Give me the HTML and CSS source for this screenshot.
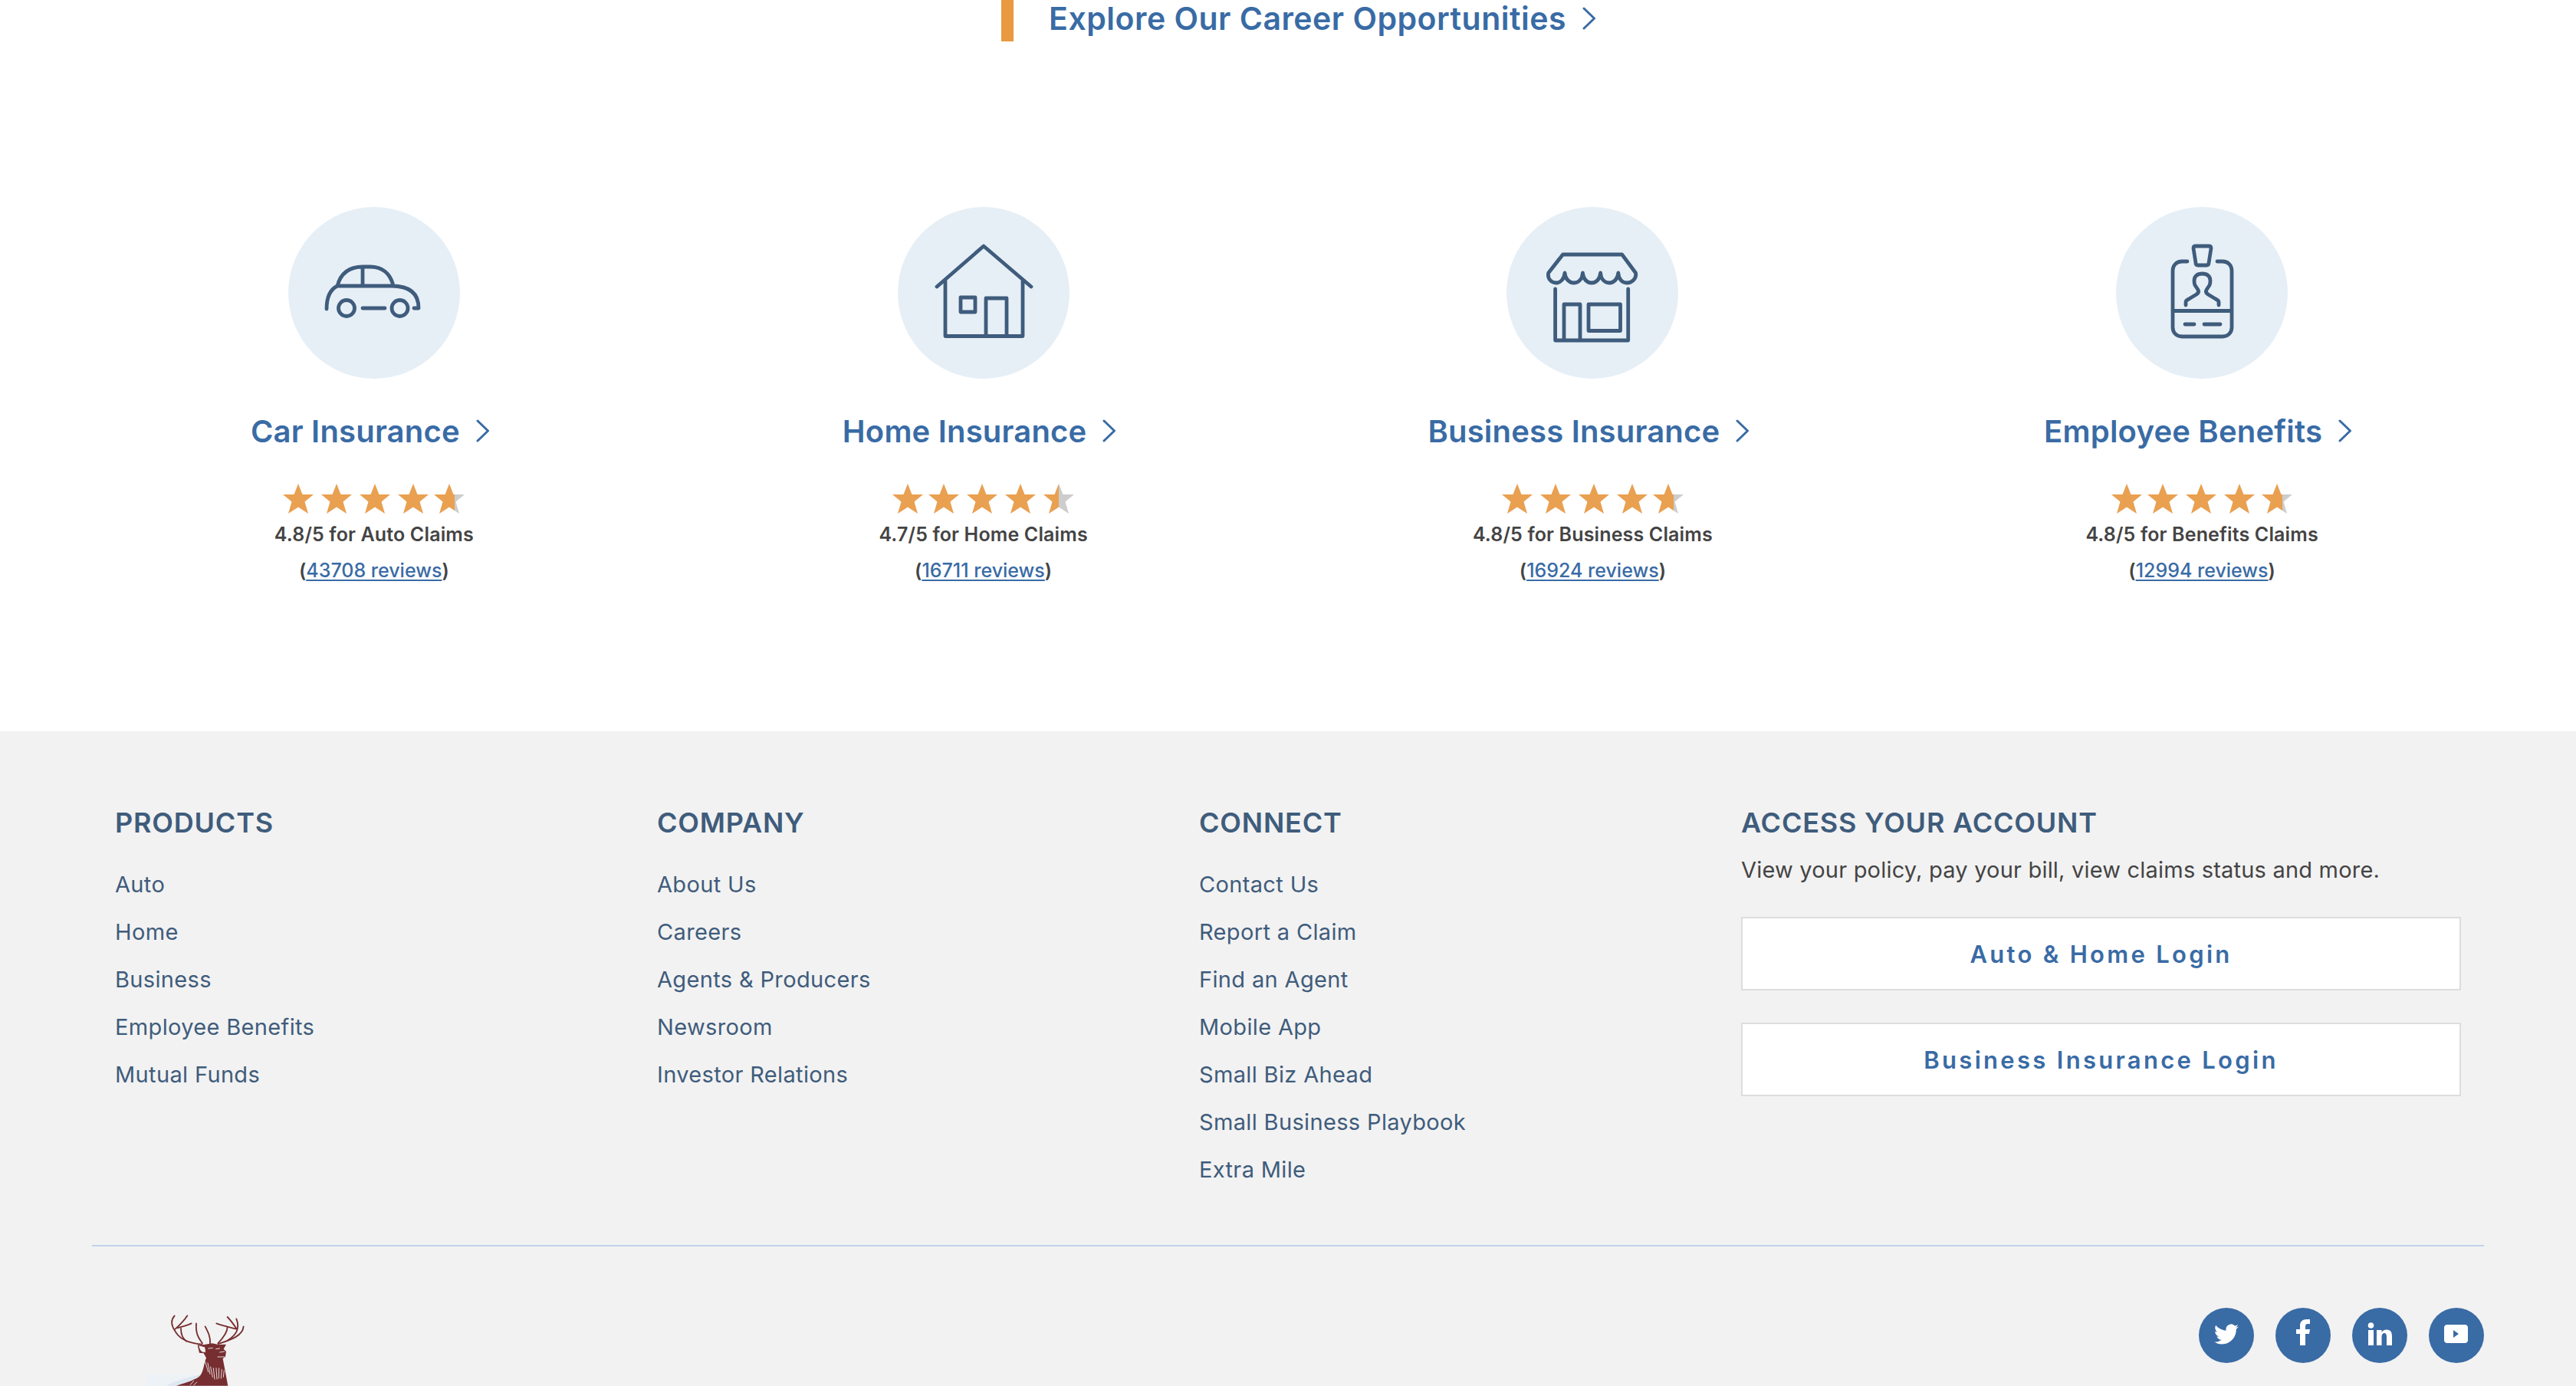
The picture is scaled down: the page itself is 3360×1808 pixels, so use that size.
FILE: index.html
```html
<!DOCTYPE html>
<html lang="en">
<head>
<meta charset="utf-8">
<title>Insurance</title>
<link rel="stylesheet" href="styles.css">
</head>
<body>
<svg class="defs" width="0" height="0" aria-hidden="true">
  <defs>
    <linearGradient id="p68"><stop offset="68%" stop-color="#E9A050"/><stop offset="68%" stop-color="#CDCDCD"/></linearGradient>
    <linearGradient id="p50"><stop offset="51%" stop-color="#E9A050"/><stop offset="51%" stop-color="#CDCDCD"/></linearGradient>
    <symbol id="star" viewBox="0 0 40 39"><polygon points="20,0 25.5,14 40,14 28.5,23.5 33,39 20,30.5 7,39 11.5,23.5 0,14 14.5,14"/></symbol>
    <symbol id="chev" viewBox="0 0 18 30"><path d="M2 2 L15.5 15 L2 28" fill="none" stroke="currentColor" stroke-width="3" stroke-linecap="round" stroke-linejoin="round"/></symbol>
  </defs>
</svg>

<a class="cta" href="#"><span class="cta-bar"></span><span class="cta-text">Explore Our Career Opportunities</span><svg class="chev"><use href="#chev"/></svg></a>

<section class="products">
  <article class="product">
    <div class="disc"><svg class="pic" viewBox="0 0 224 224"><path d="M50 133C50 120 54 108 64 103H135C158 103 170 112 170 132H164M64 103C68 88 78 78 97 78H107C122 78 133 86 137 103M97 78V103M97 132H126"/><ellipse cx="76" cy="132" rx="10.500" ry="10.500"/><ellipse cx="145.500" cy="132" rx="10.500" ry="10.500"/></svg></div>
    <a class="title" href="#">Car Insurance<svg class="chev"><use href="#chev"/></svg></a>
    <div class="stars"><svg class="star"><use href="#star"/></svg><svg class="star"><use href="#star"/></svg><svg class="star"><use href="#star"/></svg><svg class="star"><use href="#star"/></svg><svg class="star star-tight f68"><use href="#star"/></svg></div>
    <p class="rating">4.8/5 for Auto Claims</p>
    <p class="count">(<a href="#">43708 reviews</a>)</p>
  </article>
  <article class="product">
    <div class="disc"><svg class="pic" viewBox="0 0 224 224"><path d="M51 104L112 51L174 104M62 96V168.500H163V96M115 168.500V119H142V168.500M82 118H101V137H82Z"/></svg></div>
    <a class="title" href="#">Home Insurance<svg class="chev"><use href="#chev"/></svg></a>
    <div class="stars"><svg class="star"><use href="#star"/></svg><svg class="star star-tight"><use href="#star"/></svg><svg class="star"><use href="#star"/></svg><svg class="star"><use href="#star"/></svg><svg class="star f50"><use href="#star"/></svg></div>
    <p class="rating">4.7/5 for Home Claims</p>
    <p class="count">(<a href="#">16711 reviews</a>)</p>
  </article>
  <article class="product">
    <div class="disc"><svg class="pic" viewBox="0 0 224 224"><path d="M73.500 62H150.700L168.500 86C170 94 163 99 157 99C151 99 146 94 145.800 86C145 94 140 99 134 99C128 99 123 94 122.600 86C122 94 117 99 111 99C105 99 100 94 99.400 86C99 94 94 99 88 99C82 99 76.500 94 76 86C75.500 94 70 99 65 99C59 99 53 94 54.700 86ZM63.600 107V174H158.700V107M75 174V127H96V174M107 127H148.500V161.500H107Z"/></svg></div>
    <a class="title" href="#">Business Insurance<svg class="chev"><use href="#chev"/></svg></a>
    <div class="stars"><svg class="star"><use href="#star"/></svg><svg class="star"><use href="#star"/></svg><svg class="star"><use href="#star"/></svg><svg class="star"><use href="#star"/></svg><svg class="star star-tight f68"><use href="#star"/></svg></div>
    <p class="rating">4.8/5 for Business Claims</p>
    <p class="count">(<a href="#">16924 reviews</a>)</p>
  </article>
  <article class="product">
    <div class="disc"><svg class="pic" viewBox="0 0 224 224"><path d="M93 71H86C79 71 74 76 74 83V157C74 164 79 169 86 169H139C146 169 151 164 151 157V83C151 76 146 71 139 71H132M74 135.500H151M90 153H102M115 153H136M104 51H121C123 51 124 52 124 54L121 73C121 75 120 76 118 76H107C105 76 104 75 104 73L101 54C101 52 102 51 104 51ZM91 128V124C91 122 93 121 95 120L105 114C108 112 108 110 107 108L103 102C102 100 102 98 102 96C102 90 106 87 112.500 87C119 87 123 90 123 96C123 98 123 100 122 102L118 108C117 110 117 112 120 114L130 120C132 121 134 122 134 124V128"/></svg></div>
    <a class="title" href="#">Employee Benefits<svg class="chev"><use href="#chev"/></svg></a>
    <div class="stars"><svg class="star"><use href="#star"/></svg><svg class="star star-tight"><use href="#star"/></svg><svg class="star"><use href="#star"/></svg><svg class="star"><use href="#star"/></svg><svg class="star star-nudge f68"><use href="#star"/></svg></div>
    <p class="rating">4.8/5 for Benefits Claims</p>
    <p class="count">(<a href="#">12994 reviews</a>)</p>
  </article>
</section>

<footer class="footer">
  <div class="columns">
    <nav class="col">
      <h3>PRODUCTS</h3>
      <ul>
        <li><a href="#">Auto</a></li><li><a href="#">Home</a></li><li><a href="#">Business</a></li><li><a href="#">Employee Benefits</a></li><li><a href="#">Mutual Funds</a></li>
      </ul>
    </nav>
    <nav class="col">
      <h3>COMPANY</h3>
      <ul>
        <li><a href="#">About Us</a></li><li><a href="#">Careers</a></li><li><a href="#">Agents &amp; Producers</a></li><li><a href="#">Newsroom</a></li><li><a href="#">Investor Relations</a></li>
      </ul>
    </nav>
    <nav class="col">
      <h3>CONNECT</h3>
      <ul>
        <li><a href="#">Contact Us</a></li><li><a href="#">Report a Claim</a></li><li><a href="#">Find an Agent</a></li><li><a href="#">Mobile App</a></li><li><a href="#">Small Biz Ahead</a></li><li><a href="#">Small Business Playbook</a></li><li><a href="#">Extra Mile</a></li>
      </ul>
    </nav>
    <div class="col account">
      <h3>ACCESS YOUR ACCOUNT</h3>
      <p>View your policy, pay your bill, view claims status and more.</p>
      <a class="login" href="#">Auto &amp; Home Login</a>
      <a class="login" href="#">Business Insurance Login</a>
    </div>
  </div>
  <div class="bottom">
    <svg class="deer" viewBox="270 340 400 284" role="img" aria-label="Stag logo">
      <rect class="patch" x="272" y="580" width="230" height="44"/>
      <path class="swoosh" d="M350 624C390 604 440 590 490 580V624Z"/>
      <g class="antler">
        <path d="M490 462C440 458 400 440 384 408C372 390 365 370 383 350"/>
        <path d="M386 402C405 385 420 370 433 350"/>
        <path d="M395 398C415 392 430 388 449 380"/>
        <path d="M408 400C408 425 415 440 430 450"/>
        <path d="M492 458C480 440 465 425 468 380"/>
        <path d="M522 460C525 435 515 415 503 392"/>
        <path d="M555 460C600 445 650 430 653 392"/>
        <path d="M590 447C625 425 640 400 625 362"/>
        <path d="M625 400C615 385 605 370 590 355"/>
        <path d="M625 402C600 395 575 390 547 380"/>
        <path d="M553 458C575 435 590 415 590 395"/>
      </g>
      <path class="hide" d="M500 463L530 458L555 463L585 462L575 480L585 490L582 510L572 518L580 560L592 624H390C430 612 470 600 485 582C497 565 497 540 507 515L497 497L480 495L473 465Z"/>
      <path class="ear" d="M476 465L503 472L506 492C495 497 482 494 476 465Z"/>
      <g class="hair">
        <path d="M515 478L532 476M545 480L560 478M560 493L578 490M552 511L578 511"/>
        <path d="M503 530L515 570M513 535L522 578M524 550L532 590M535 555L540 598M546 555L549 598M557 555L556 595M568 560L565 595M577 565L574 590"/>
        <path d="M445 620L458 605M458 622L470 610"/>
      </g>
    </svg>
    <div class="social">
      <a class="soc" href="#" aria-label="Twitter"><svg viewBox="0 2 24 20" class="soc-tw"><path d="M23.953 4.57a10 10 0 01-2.825.775 4.958 4.958 0 002.163-2.723c-.951.555-2.005.959-3.127 1.184a4.92 4.92 0 00-8.384 4.482C7.69 8.095 4.067 6.13 1.64 3.162a4.822 4.822 0 00-.666 2.475c0 1.71.87 3.213 2.188 4.096a4.904 4.904 0 01-2.228-.616v.06a4.923 4.923 0 003.946 4.827 4.996 4.996 0 01-2.212.085 4.936 4.936 0 004.604 3.417 9.867 9.867 0 01-6.102 2.105c-.39 0-.779-.023-1.17-.067a13.995 13.995 0 007.557 2.209c9.053 0 13.998-7.496 13.998-13.985 0-.21 0-.42-.015-.63A9.935 9.935 0 0024 4.59z"/></svg></a>
      <a class="soc" href="#" aria-label="Facebook"><svg viewBox="0 0 72 72"><path d="M39 49V34h5l1-6h-6v-4c0-2 1-3 3-3h3v-6h-4c-6 0-9 3-9 8v5h-5v6h5v15z"/></svg></a>
      <a class="soc" href="#" aria-label="LinkedIn"><svg viewBox="0 0 72 72"><circle cx="24.500" cy="23" r="3.800"/><path d="M21 29h7v20h-7zM32 29h6.500v3c1.200-2 3.500-3.500 6.500-3.500 5.500 0 7 3.500 7 9V49h-7V38c0-3-.7-5-3-5s-3.500 2-3.500 5v11H32z"/></svg></a>
      <a class="soc" href="#" aria-label="YouTube"><svg viewBox="0 0 72 72"><path fill-rule="evenodd" d="M24 22h23c2.500 0 4 1.500 4 4v16c0 2.500-1.500 4-4 4H24c-2.500 0-4-1.500-4-4V26c0-2.500 1.500-4 4-4zM32 29v10l7-5z"/></svg></a>
    </div>
  </div>
</footer>
</body>
</html>
```

FILE: styles.css
```css
* { box-sizing: border-box; }
html, body { margin: 0; padding: 0; }
body {
  width: 3360px;
  height: 1808px;
  overflow: hidden;
  background: #fff;
  font-family: "Inter", "Lato", sans-serif;
  color: #444;
}
a { color: #396BA5; text-decoration: none; }
.defs { position: absolute; }

.cta {
  display: flex;
  align-items: center;
  justify-content: center;
  height: 54px;
  padding-left: 28px;
  font-size: 41px;
  font-weight: 600;
}
.cta-bar { width: 16px; height: 54px; background: #E9993F; margin-right: 46px; }
.cta-text { position: relative; top: -3px; letter-spacing: 0.5px; }
.chev { width: 18px; height: 30px; margin-left: 21px; flex: none; color: #396BA5; }
.cta .chev { position: relative; top: -3px; }

.products {
  display: grid;
  grid-template-columns: repeat(4, 1fr);
  width: 3179px;
  margin: 216px auto 0;
  padding-bottom: 194px;
}
.product { display: flex; flex-direction: column; align-items: center; }
.disc { width: 224px; height: 224px; border-radius: 50%; background: #E6EFF6; }
.pic { display: block; width: 224px; height: 224px; fill: none; stroke: #3F5C7C; stroke-width: 4.8; stroke-linecap: round; stroke-linejoin: round; }
.title {
  display: flex;
  align-items: center;
  height: 48px;
  margin-top: 44px;
  padding-right: 10px;
  font-size: 40px;
  font-weight: 600;
  letter-spacing: 0.2px;
  white-space: nowrap;
}
.stars { display: flex; gap: 10px; margin-top: 45px; height: 39px; }
.star { width: 40px; height: 39px; fill: #E9A050; flex: none; }
.star-tight { margin-left: -3px; }
.star-nudge { margin-left: -1px; }
.f68 { fill: url(#p68); }
.f50 { fill: url(#p50); }
.rating { margin: 11px 0 0; font-size: 25px; line-height: 32px; font-weight: 600; letter-spacing: 0.15px; color: #444; white-space: nowrap; }
.count { margin: 15px 0 0; font-size: 25px; line-height: 32px; font-weight: 600; color: #444; white-space: nowrap; }
.count a { text-decoration: underline; text-decoration-thickness: 2px; text-underline-offset: 3px; font-weight: 500; }

.footer { background: #F2F2F2; padding: 97px 120px 0; height: 854px; }
.columns { display: grid; grid-template-columns: 707px 707px 707px 939px; padding-left: 30px; height: 573px; }
.col h3 { margin: 0; font-size: 36px; line-height: 44px; font-weight: 600; letter-spacing: 0.8px; color: #3F5C7C; white-space: nowrap; }
.col ul { list-style: none; margin: 28px 0 0; padding: 0; }
.col li { height: 62px; line-height: 62px; font-size: 29px; letter-spacing: 0.35px; white-space: nowrap; }
.col li a { color: #3F5C7C; }
.account p { margin: 20px 0 0; font-size: 29px; line-height: 40px; letter-spacing: 0.2px; color: #444; white-space: nowrap; }
.login {
  display: flex;
  align-items: center;
  justify-content: center;
  height: 96px;
  margin-top: 41px;
  background: #fff;
  border: 2px solid #DDD;
  font-size: 31px;
  font-weight: 600;
  letter-spacing: 3.300px;
}
.login + .login { margin-top: 42px; }

.bottom {
  display: flex;
  justify-content: space-between;
  align-items: flex-start;
  border-top: 2px solid #BFD3E9;
}
.deer { width: 133.300px; height: 94.700px; margin: 87px 0 0 70px; flex: none; }
.patch { fill: #EDF2F7; }
.swoosh { fill: #DCE7F1; }
.antler path { fill: none; stroke: #772E30; stroke-width: 5.500; stroke-linecap: round; }
.hide { fill: #772E30; }
.ear { fill: #F2F2F2; stroke: #772E30; stroke-width: 3; }
.hair path { fill: none; stroke: #F2F2F2; stroke-width: 2.600; stroke-linecap: round; }
.social { display: flex; gap: 28px; margin-top: 80px; }
.soc { display: block; width: 72px; height: 72px; border-radius: 50%; background: #396BA5; fill: #fff; }
.soc svg { display: block; width: 72px; height: 72px; }
.soc .soc-tw { width: 32px; height: 27px; margin: 21px 0 0 20px; }
```
